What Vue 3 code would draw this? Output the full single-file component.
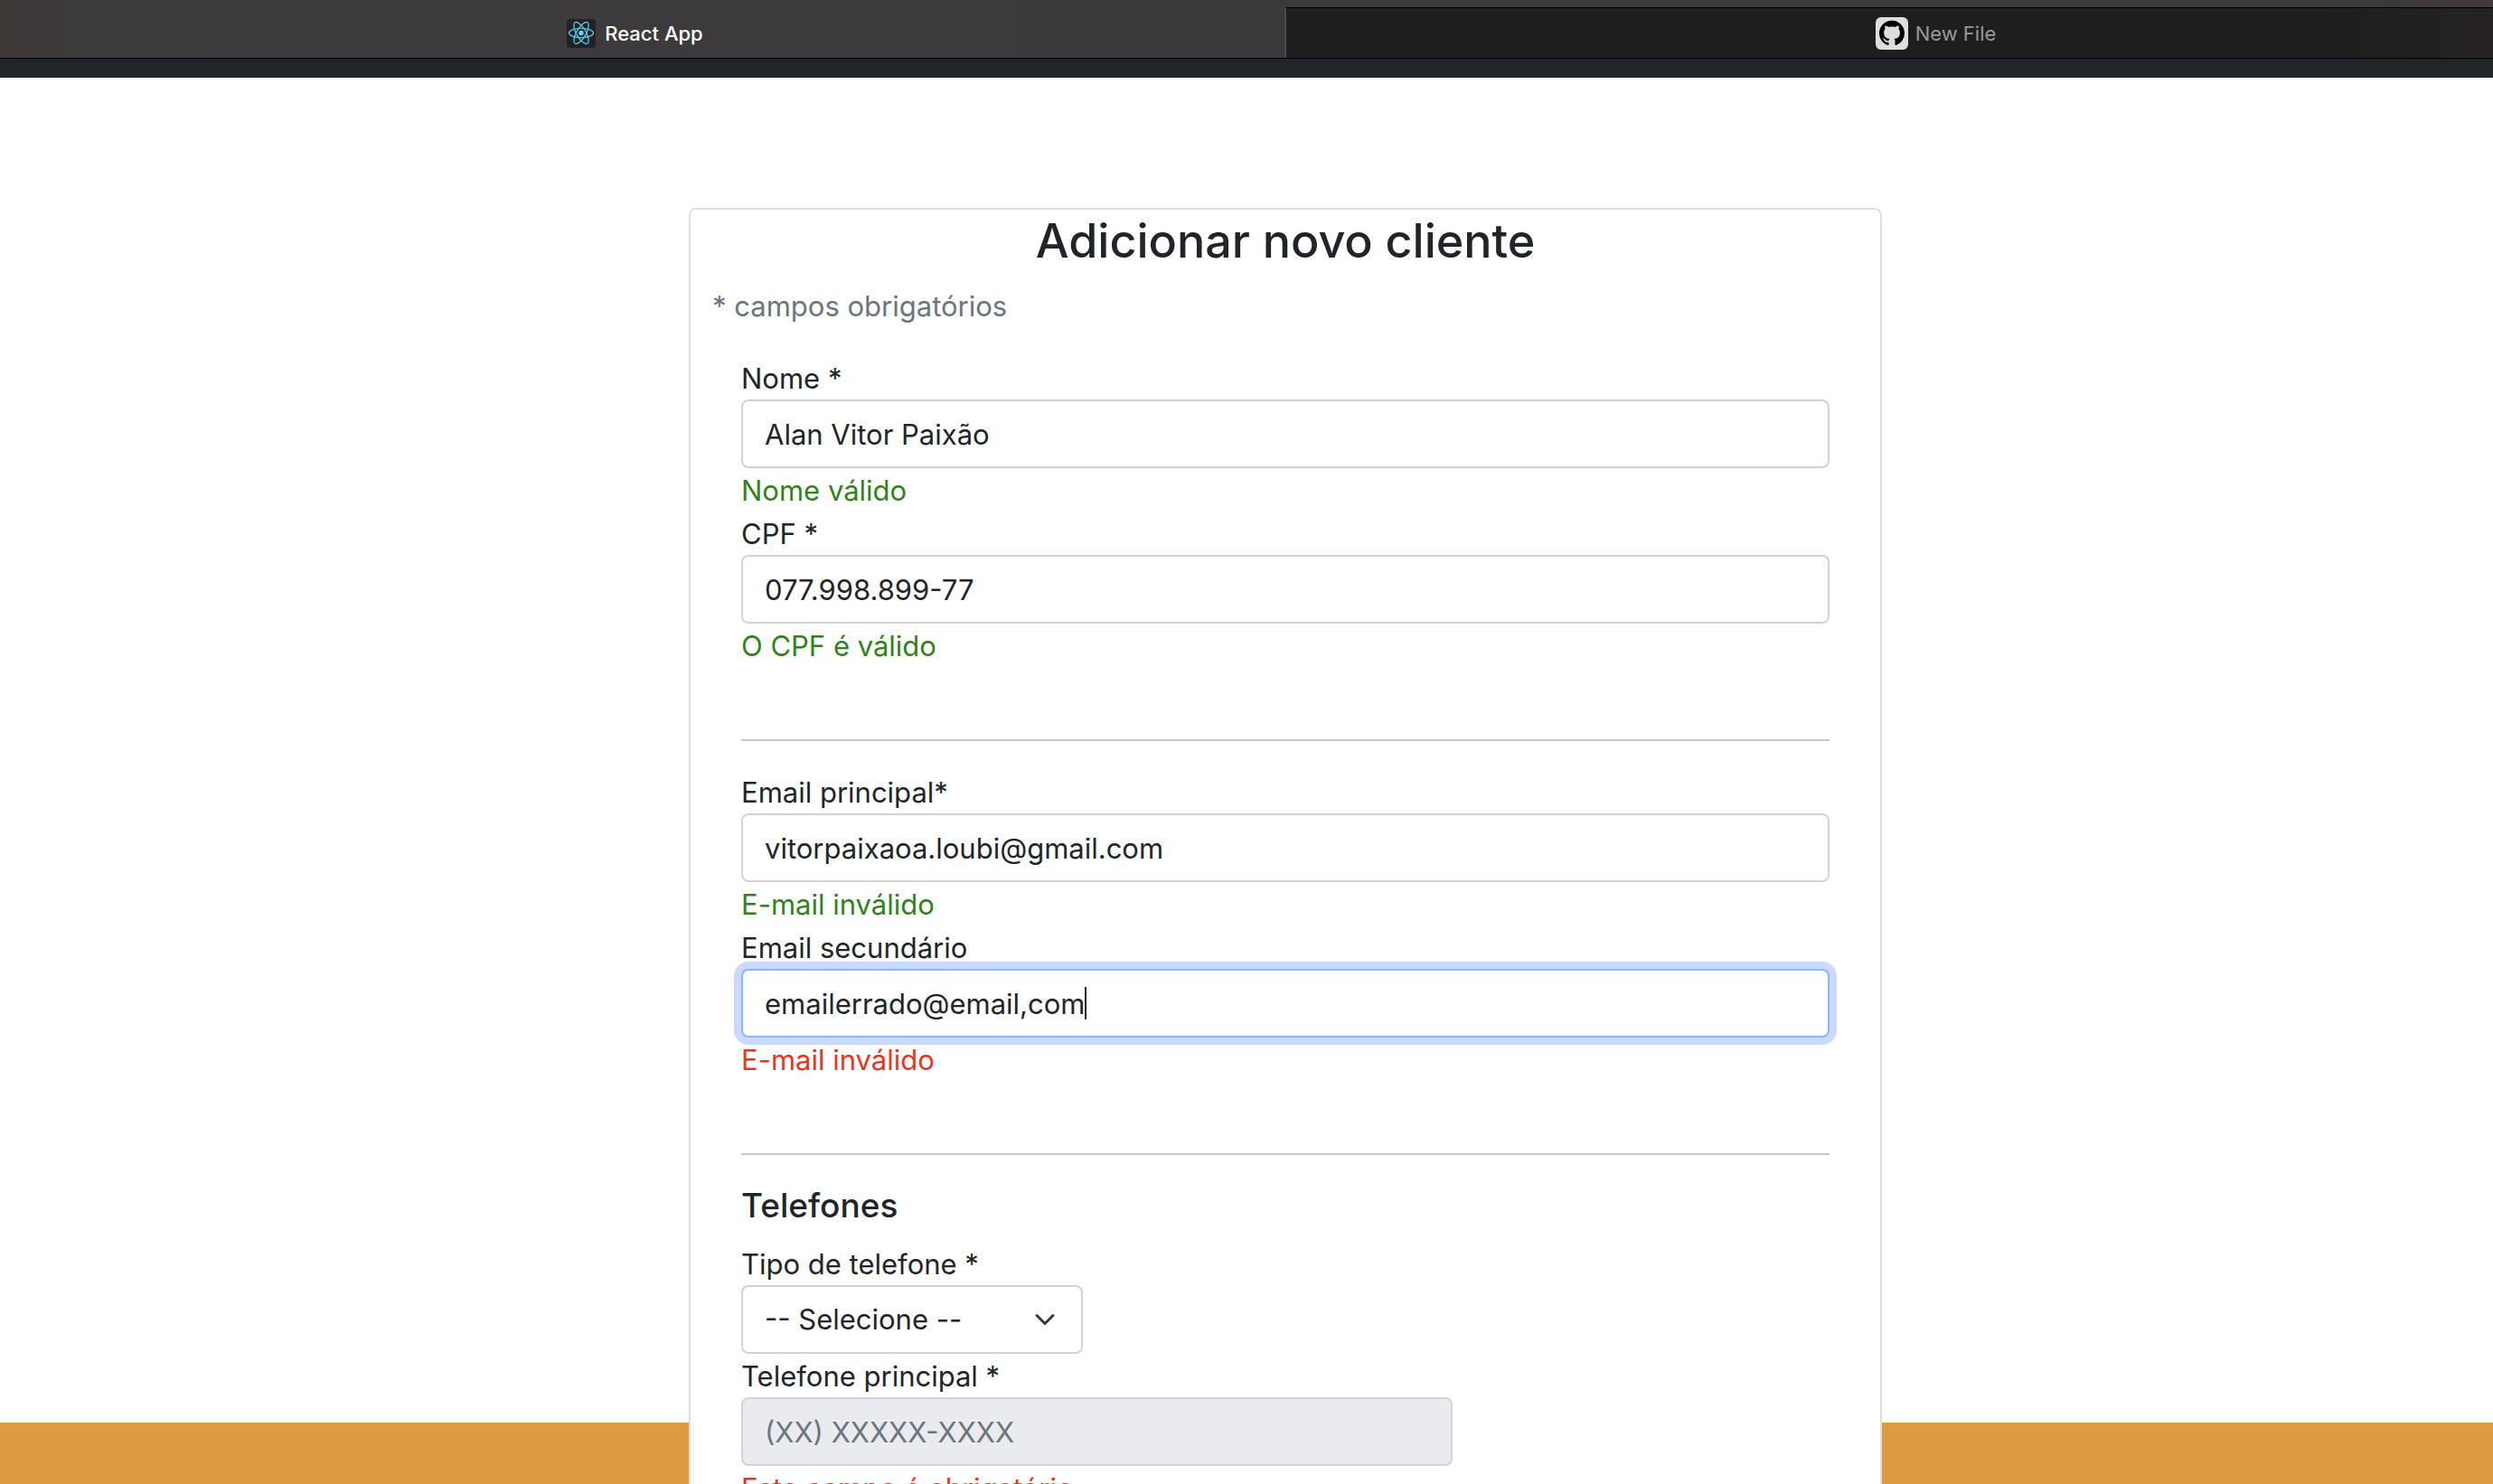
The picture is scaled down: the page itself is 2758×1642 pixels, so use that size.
<script setup>
import { ref } from 'vue'

const nome = ref('Alan Vitor Paixão')
const cpf = ref('077.998.899-77')
const email = ref('vitorpaixaoa.loubi@gmail.com')
const emailSecundario = ref('emailerrado@email,com')
const tipo = ref('')
const telefone = ref('')
</script>

<template>
  <div class="window">
    <nav class="tabs" aria-label="Abas">
      <button type="button" class="tab tab-active">
        <svg class="icon-react" viewBox="0 0 32 32" aria-hidden="true">
          <rect width="32" height="32" rx="4" fill="#222" />
          <g fill="none" stroke="#61dafb" stroke-width="1.3" opacity="0.9">
            <ellipse cx="16" cy="15.500" rx="13.500" ry="5.200" />
            <ellipse cx="16" cy="15.500" rx="13.500" ry="5.200" transform="rotate(60 16 15.500)" />
            <ellipse cx="16" cy="15.500" rx="13.500" ry="5.200" transform="rotate(120 16 15.500)" />
          </g>
          <circle cx="16" cy="15.500" r="2.700" fill="#61dafb" />
        </svg>
        <span>React App</span>
      </button>
      <button type="button" class="tab tab-idle">
        <svg class="icon-github" viewBox="0 0 36 36" aria-hidden="true">
          <rect width="36" height="36" rx="6" fill="#dededf" />
          <g transform="translate(4 3.700) scale(1.750)">
            <path
              fill="#000"
              d="M8 0C3.58 0 0 3.58 0 8c0 3.54 2.29 6.53 5.47 7.59.4.07.55-.17.55-.38 0-.19-.01-.82-.01-1.49-2.01.37-2.53-.49-2.69-.94-.09-.23-.48-.94-.82-1.13-.28-.15-.68-.52-.01-.53.63-.01 1.08.58 1.23.82.72 1.21 1.87.87 2.33.66.07-.52.28-.87.51-1.07-1.78-.2-3.64-.89-3.64-3.95 0-.87.31-1.59.82-2.15-.08-.2-.36-1.02.08-2.12 0 0 .67-.21 2.2.82.64-.18 1.32-.27 2-.27s1.36.09 2 .27c1.53-1.04 2.2-.82 2.2-.82.44 1.1.16 1.92.08 2.12.51.56.82 1.27.82 2.15 0 3.07-1.87 3.75-3.65 3.95.29.25.54.73.54 1.48 0 1.07-.01 1.93-.01 2.2 0 .21.15.46.55.38A8.01 8.01 0 0 0 16 8c0-4.42-3.58-8-8-8z"
            />
          </g>
        </svg>
        <span>New File</span>
      </button>
    </nav>
    <div class="navbar"></div>

    <main class="page">
      <form class="card" @submit.prevent>
        <h3 class="title">Adicionar novo cliente</h3>
        <p class="note">* campos obrigatórios</p>

        <section class="group">
          <label for="nome">Nome *</label>
          <input id="nome" v-model="nome" class="control" type="text" />
          <p class="feedback valid">Nome válido</p>
          <label for="cpf">CPF *</label>
          <input id="cpf" v-model="cpf" class="control" type="text" />
          <p class="feedback valid">O CPF é válido</p>
        </section>

        <hr />

        <section class="group">
          <label for="email">Email principal*</label>
          <input id="email" v-model="email" class="control" type="text" />
          <p class="feedback valid">E-mail inválido</p>
          <label for="email2">Email secundário</label>
          <div class="field">
            <input id="email2" v-model="emailSecundario" class="control focused" type="text" />
            <span class="caret"></span>
          </div>
          <p class="feedback invalid">E-mail inválido</p>
        </section>

        <hr />

        <section class="group">
          <h5 class="subtitle">Telefones</h5>
          <label for="tipo">Tipo de telefone *</label>
          <div class="field select-field">
            <select id="tipo" v-model="tipo" class="control">
              <option value="">-- Selecione --</option>
              <option value="celular">Celular</option>
              <option value="fixo">Fixo</option>
            </select>
            <svg class="chevron" viewBox="0 0 16 16" aria-hidden="true">
              <path d="m2 5 6 6 6-6" fill="none" stroke="#343a40" stroke-width="2" stroke-linecap="round" stroke-linejoin="round" />
            </svg>
          </div>
          <label for="telefone">Telefone principal *</label>
          <input id="telefone" v-model="telefone" class="control phone" type="tel" placeholder="(XX) XXXXX-XXXX" disabled />
          <p class="feedback invalid">Este campo é obrigatório</p>
        </section>
      </form>
      <footer class="footer"></footer>
    </main>
  </div>
</template>

<style>
body {
  margin: 0;
  background: #fff;
}
</style>

<style scoped>
* {
  box-sizing: border-box;
}

.window {
  display: flex;
  flex-direction: column;
  height: 100vh;
  overflow: hidden;
  font-family: Inter, "Liberation Sans", sans-serif;
  font-size: 31px;
  line-height: 48px;
  color: #212529;
}

/* the window runs on past the right edge of the screen */
.tabs,
.page {
  width: calc(100% + 86px);
}

.tabs {
  flex: none;
  display: flex;
  height: 65px;
  background: linear-gradient(90deg, #3f3837, #3c3a3a 3%, #3e3b3e 10%, #3b393c 50%, #3b393b 92%, #49393d);
  border-bottom: 1px solid #000;
}

.tab {
  flex: 1;
  display: flex;
  align-items: center;
  justify-content: center;
  margin: 0;
  padding: 0;
  border: 0;
  border-radius: 0;
  background: none;
  font-family: inherit;
  font-size: 22px;
  line-height: 28px;
}

.tab-active {
  gap: 10px;
  padding: 10px 18px 0 0;
  color: #fff;
  font-weight: 500;
}

.tab-idle {
  gap: 8px;
  margin: 8px 0 0 -2px;
  padding: 0 0 0 16px;
  border-top: 1px solid #000;
  border-left: 2px solid #4b494c;
  background: linear-gradient(90deg, #1e1e1e 80%, #212121 88%, #282122 97%);
  color: #98989a;
}

.icon-react {
  width: 32px;
  height: 32px;
}

.icon-github {
  width: 36px;
  height: 36px;
}

.navbar {
  flex: none;
  height: 21px;
  background: #212529;
}

.page {
  position: relative;
  flex: 1;
  min-height: 0;
  overflow: hidden;
  padding-top: 144px;
}

.card {
  position: relative;
  z-index: 1;
  width: 100%;
  max-width: 1320px;
  margin: 0 auto;
  padding: 0 24px 80px;
  border: 2px solid #dfdfdf;
  border-radius: 8px;
  background: #fff;
}

.title {
  margin: 0 0 12px;
  font-size: 52px;
  font-weight: 500;
  line-height: 70px;
  text-align: center;
}

.note,
.feedback,
label {
  display: block;
  margin: 0;
  padding-top: 2px;
  line-height: 46px;
}

.note {
  margin-bottom: 32px;
  color: #6c757d;
}

.group {
  padding: 0 32px;
}

.control {
  display: block;
  width: 100%;
  height: 76px;
  padding: 12px 24px;
  border: 2px solid #ced4da;
  border-radius: 8px;
  background: #fff;
  color: #212529;
  font-family: inherit;
  font-size: inherit;
  line-height: 48px;
  outline: none;
  appearance: none;
}

.control::placeholder {
  color: #6c757d;
  opacity: 1;
}

.control:disabled {
  background: #e9ebef;
}

.control.focused {
  border-color: #8fb5f8;
  box-shadow: 0 0 0 8px #cbdafc;
}

.field {
  position: relative;
}

.caret {
  position: absolute;
  top: 20px;
  left: 380px;
  width: 2px;
  height: 36px;
  background: #212529;
}

.select-field {
  width: 378px;
}

.chevron {
  position: absolute;
  top: 26px;
  right: 30px;
  width: 24px;
  height: 24px;
  pointer-events: none;
}

.phone {
  width: 787px;
}

.valid {
  color: #357f23;
}

.invalid {
  color: #eb3323;
}

hr {
  margin: 80px 32px 32px;
  height: 2px;
  border: 0;
  background: #c8c8c9;
}

.subtitle {
  margin: 0 0 16px;
  font-size: 37px;
  font-weight: 500;
  line-height: 48px;
}

.footer {
  position: absolute;
  right: 0;
  bottom: 0;
  left: 0;
  height: 68px;
  background: #de9b3f;
}
</style>
